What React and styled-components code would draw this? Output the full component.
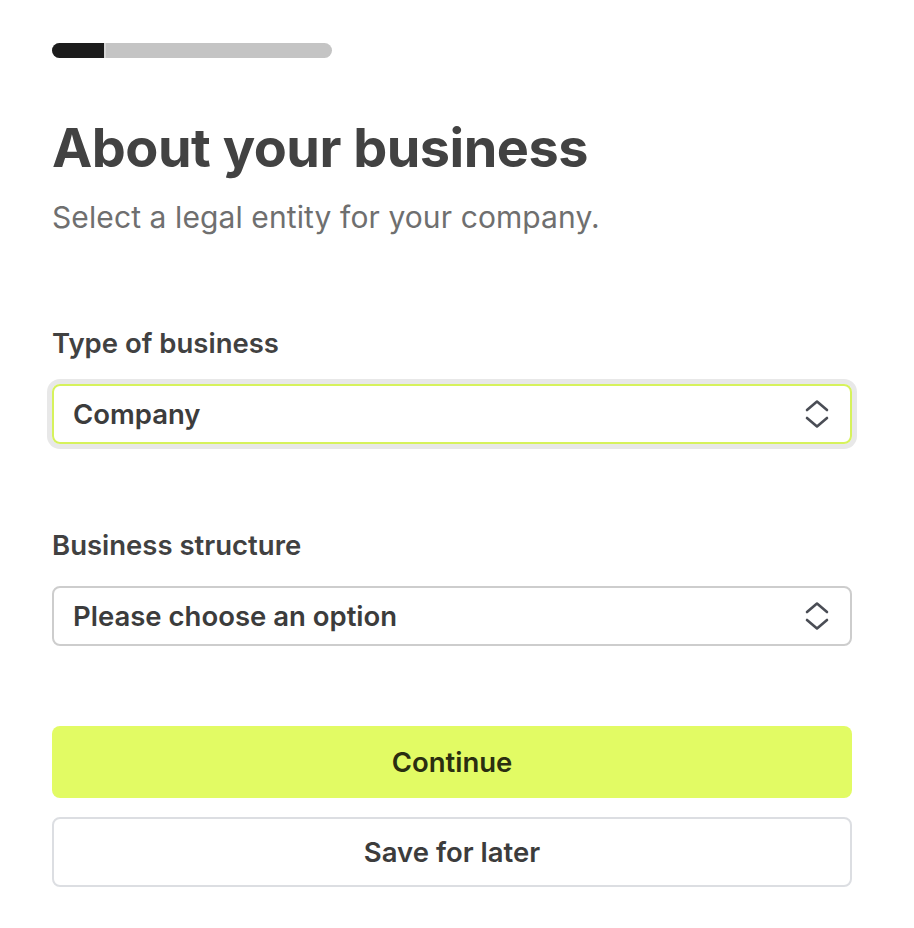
import React from 'react';
import styled, { createGlobalStyle } from 'styled-components';

const GlobalStyle = createGlobalStyle`
  body {
    margin: 0;
    background: #ffffff;
    font-family: Inter, 'Noto Sans', sans-serif;
  }
`;

const Page = styled.main`
  width: 800px;
  padding: 43px 0 0 52px;
  display: flex;
  flex-direction: column;
`;

const Progress = styled.div`
  width: 280px;
  height: 15px;
  border-radius: 8px;
  background: #c4c4c4;
  overflow: hidden;
  display: flex;
`;

const ProgressFill = styled.div`
  height: 100%;
  background: #1c1c1c;
  border-right: 2px solid #d6d6d6;
`;

const Title = styled.h1`
  margin: 58px 0 0;
  font-size: 54px;
  line-height: 64px;
  font-weight: 700;
  letter-spacing: -0.5px;
  color: #424242;
`;

const Subtitle = styled.p`
  margin: 19px 0 0;
  font-size: 30px;
  line-height: 36px;
  font-weight: 400;
  letter-spacing: 0.1px;
  color: #6f6f6f;
`;

const Field = styled.div`
  display: flex;
  flex-direction: column;
  margin-top: ${p => p.$top}px;
`;

const Label = styled.label`
  font-size: 27.5px;
  line-height: 34px;
  font-weight: 600;
  color: #414141;
  margin-bottom: 24px;
`;

const Select = styled.div`
  height: 60px;
  box-sizing: border-box;
  border-radius: 8px;
  border: 2px solid ${p => (p.$focused ? '#d6f25c' : '#cdcdcd')};
  box-shadow: ${p => (p.$focused ? '0 0 0 5px #e8e8e8' : 'none')};
  display: flex;
  align-items: center;
  justify-content: space-between;
  padding: 0 20px 0 19px;
  font-size: 27.5px;
  font-weight: 600;
  color: #3c3c3c;
`;

const Button = styled.button`
  width: 100%;
  box-sizing: border-box;
  height: ${p => p.$height}px;
  border-radius: 8px;
  font-family: inherit;
  font-size: 27.5px;
  font-weight: 600;
  cursor: pointer;
  background: ${p => (p.$primary ? '#e2fb64' : '#ffffff')};
  color: ${p => (p.$primary ? '#2a2e10' : '#3c3c3c')};
  border: ${p => (p.$primary ? 'none' : '2px solid #dcdee2')};
`;

const Actions = styled.div`
  display: flex;
  flex-direction: column;
  gap: 19px;
  margin-top: 80px;
`;

function UpDown() {
  return (
    <svg width="26" height="32" viewBox="0 0 26 32" fill="none" stroke="#4a4d55" strokeWidth="2.6" strokeLinecap="round" strokeLinejoin="round">
      <path d="M3 12 L13 3.5 L23 12" />
      <path d="M3 20 L13 28.5 L23 20" />
    </svg>
  );
}

export default function App() {
  return (
    <>
      <GlobalStyle />
      <Page>
        <Progress>
          <ProgressFill style={{ width: `${(52 / 280) * 100}%` }} />
        </Progress>
        <Title>About your business</Title>
        <Subtitle>Select a legal entity for your company.</Subtitle>

        <Field $top={91}>
          <Label>Type of business</Label>
          <Select $focused>
            <span>Company</span>
            <UpDown />
          </Select>
        </Field>

        <Field $top={84}>
          <Label>Business structure</Label>
          <Select>
            <span>Please choose an option</span>
            <UpDown />
          </Select>
        </Field>

        <Actions>
          <Button $primary $height={72}>Continue</Button>
          <Button $height={70}>Save for later</Button>
        </Actions>
      </Page>
    </>
  );
}
